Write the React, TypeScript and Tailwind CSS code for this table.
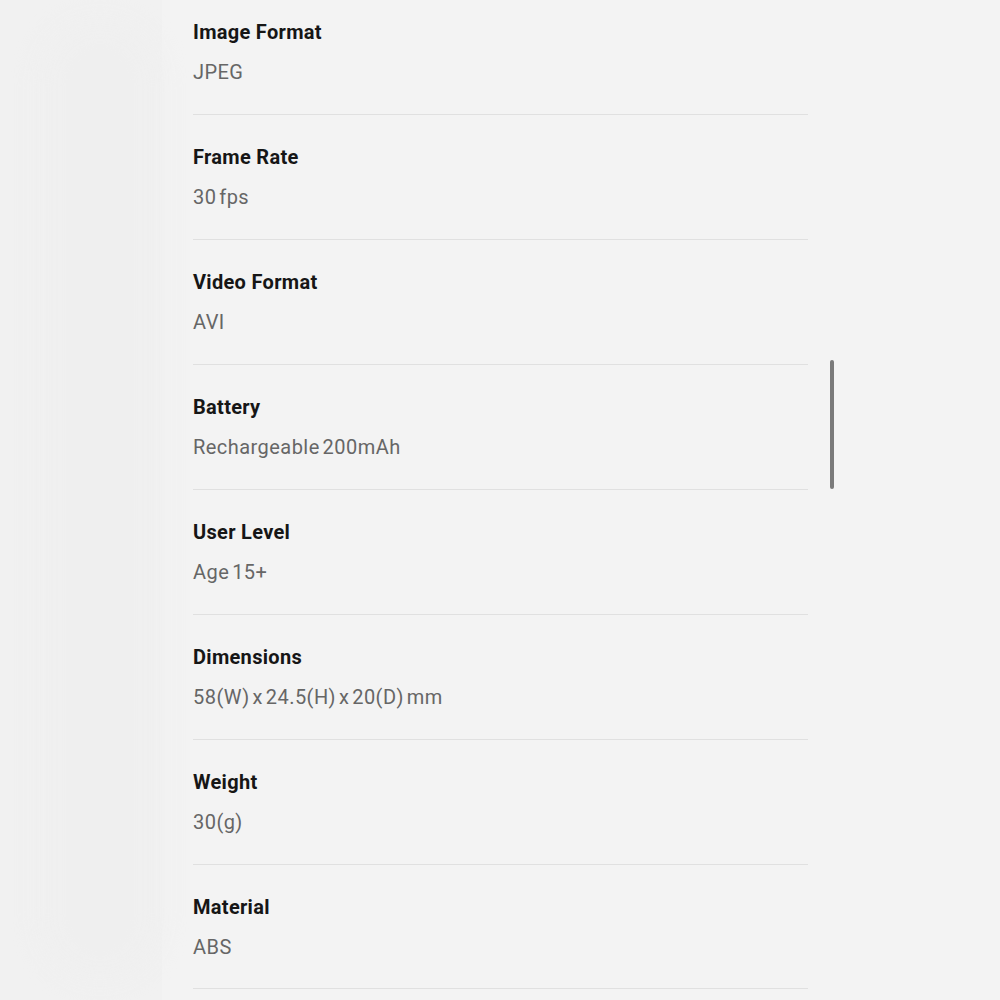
import React from 'react';

const SPECS = [
  { label: 'Image Format', value: 'JPEG' },
  { label: 'Frame Rate', value: '30 fps' },
  { label: 'Video Format', value: 'AVI' },
  { label: 'Battery', value: 'Rechargeable 200mAh' },
  { label: 'User Level', value: 'Age 15+' },
  { label: 'Dimensions', value: '58(W) x 24.5(H) x 20(D) mm' },
  { label: 'Weight', value: '30(g)' },
  { label: 'Material', value: 'ABS' },
];

const App: React.FC = () => {
  return (
    <div className="flex h-[1000px] w-[1000px] overflow-hidden bg-[#f3f3f3] font-['Roboto',sans-serif]">
      <div className="relative w-[162px] shrink-0 bg-[#f1f1f1]">
        <div className="absolute left-[40px] top-[20px] h-[960px] w-[120px] rounded-[60px] bg-[#efefef] blur-md" />
      </div>

      <div className="flex flex-1">
        <div className="ml-[31px] w-[615px] -mt-[10px]">
          {SPECS.map((spec) => (
            <div key={spec.label} className="flex flex-col gap-3 border-b border-[#e0e0e0] py-7 last:pb-[27px]">
              <h4 className="text-[20px] font-bold leading-7 tracking-[0.3px] text-[#161616]">{spec.label}</h4>
              <p className="text-[20px] leading-7 tracking-[0.45px] [word-spacing:-2.5px] text-[#666666]">{spec.value}</p>
            </div>
          ))}
        </div>

        <div className="ml-[22px] pt-[360px]">
          <div className="h-[129px] w-[4px] rounded-full bg-[#7a7a7a]" />
        </div>
      </div>
    </div>
  );
};

export default App;
